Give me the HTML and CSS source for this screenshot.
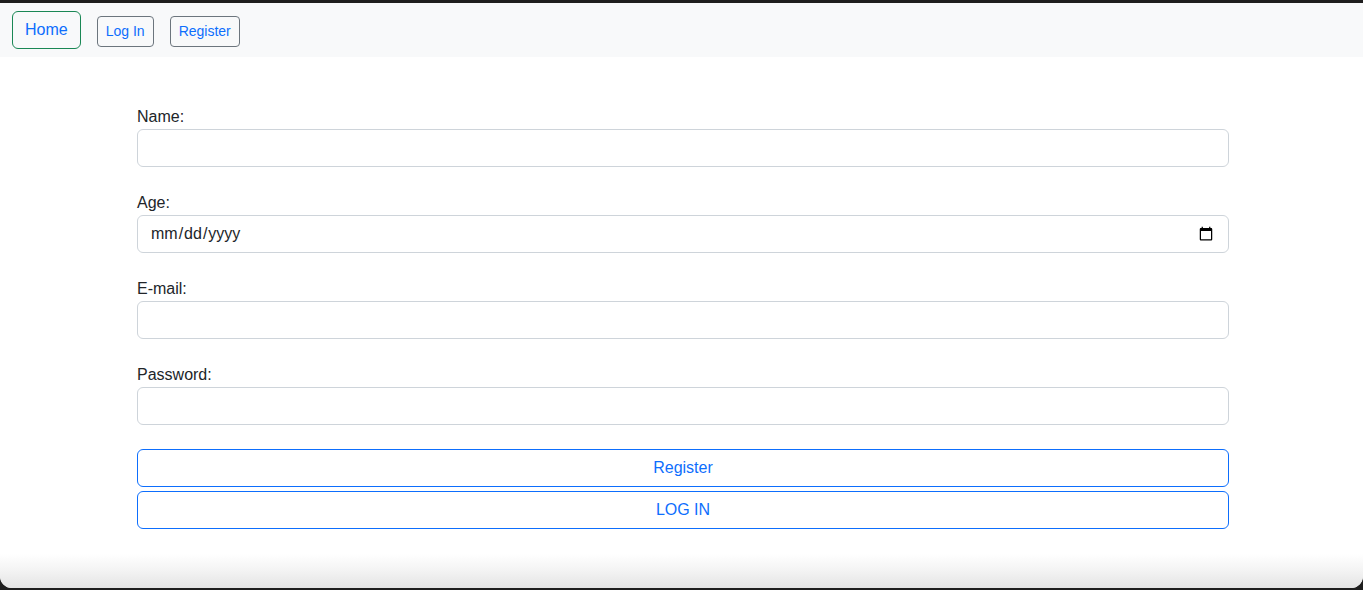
FILE: index.html
```html
<!DOCTYPE html>
<html lang="en">
<head>
<meta charset="utf-8">
<title>Register</title>
<link rel="stylesheet" href="styles.css">
</head>
<body>
<div class="window">
  <nav class="navbar">
    <a class="btn btn-home" href="#">Home</a>
    <a class="btn btn-sm" href="#">Log In</a>
    <a class="btn btn-sm" href="#">Register</a>
  </nav>
  <main class="content">
    <form class="form">
      <div class="field">
        <label for="name">Name:</label>
        <input id="name" class="input" type="text">
      </div>
      <div class="field">
        <label for="age">Age:</label>
        <input id="age" class="input" type="date">
      </div>
      <div class="field">
        <label for="email">E-mail:</label>
        <input id="email" class="input" type="email">
      </div>
      <div class="field">
        <label for="password">Password:</label>
        <input id="password" class="input" type="password">
      </div>
      <div class="actions">
        <button type="button" class="btn-wide">Register</button>
        <button type="button" class="btn-wide">LOG IN</button>
      </div>
    </form>
  </main>
  <div class="shade"></div>
</div>
</body>
</html>
```
FILE: styles.css
```css
html, body {
  margin: 0;
  padding: 0;
}
body {
  background: #1e1e1e;
  font-family: "Liberation Sans", Arial, sans-serif;
  color: #212529;
  font-size: 16px;
  line-height: 24px;
}
.window {
  height: 585px;
  margin-top: 3px;
  background: #fff;
  display: flex;
  flex-direction: column;
  border-radius: 0 0 12px 12px;
  overflow: hidden;
}
.navbar {
  background: #f8f9fa;
  height: 54px;
  box-sizing: border-box;
  padding: 0 12px;
  display: flex;
  align-items: center;
  gap: 16px;
}
.btn {
  display: inline-block;
  text-decoration: none;
  color: #0d6efd;
  border: 1px solid #6c757d;
  border-radius: 4px;
  font-size: 14px;
  line-height: 21px;
  padding: 4px 8px;
  margin-top: 2px;
}
.btn-home {
  border-color: #198754;
  border-radius: 6px;
  font-size: 16px;
  line-height: 24px;
  padding: 6px 12px;
  margin-top: 0;
}
.content {
  flex: 1;
  padding: 48px 134px 0 137px;
}
.form {
  display: flex;
  flex-direction: column;
  gap: 24px;
}
.field {
  display: flex;
  flex-direction: column;
}
.field label {
  line-height: 24px;
}
.input {
  box-sizing: border-box;
  height: 38px;
  width: 100%;
  border: 1px solid #ced4da;
  border-radius: 6px;
  padding: 6px 12px;
  font-family: "Liberation Sans", Arial, sans-serif;
  font-size: 16px;
  color: #212529;
  background: #fff;
}
.actions {
  display: flex;
  flex-direction: column;
  gap: 4px;
}
.btn-wide {
  box-sizing: border-box;
  height: 38px;
  width: 100%;
  background: #fff;
  border: 1px solid #0d6efd;
  border-radius: 6px;
  color: #0d6efd;
  font-family: "Liberation Sans", Arial, sans-serif;
  font-size: 16px;
  line-height: 24px;
}
.shade {
  height: 34px;
  background: linear-gradient(to bottom, #ffffff 0%, #f3f3f3 50%, #e4e4e4 100%);
}
```
